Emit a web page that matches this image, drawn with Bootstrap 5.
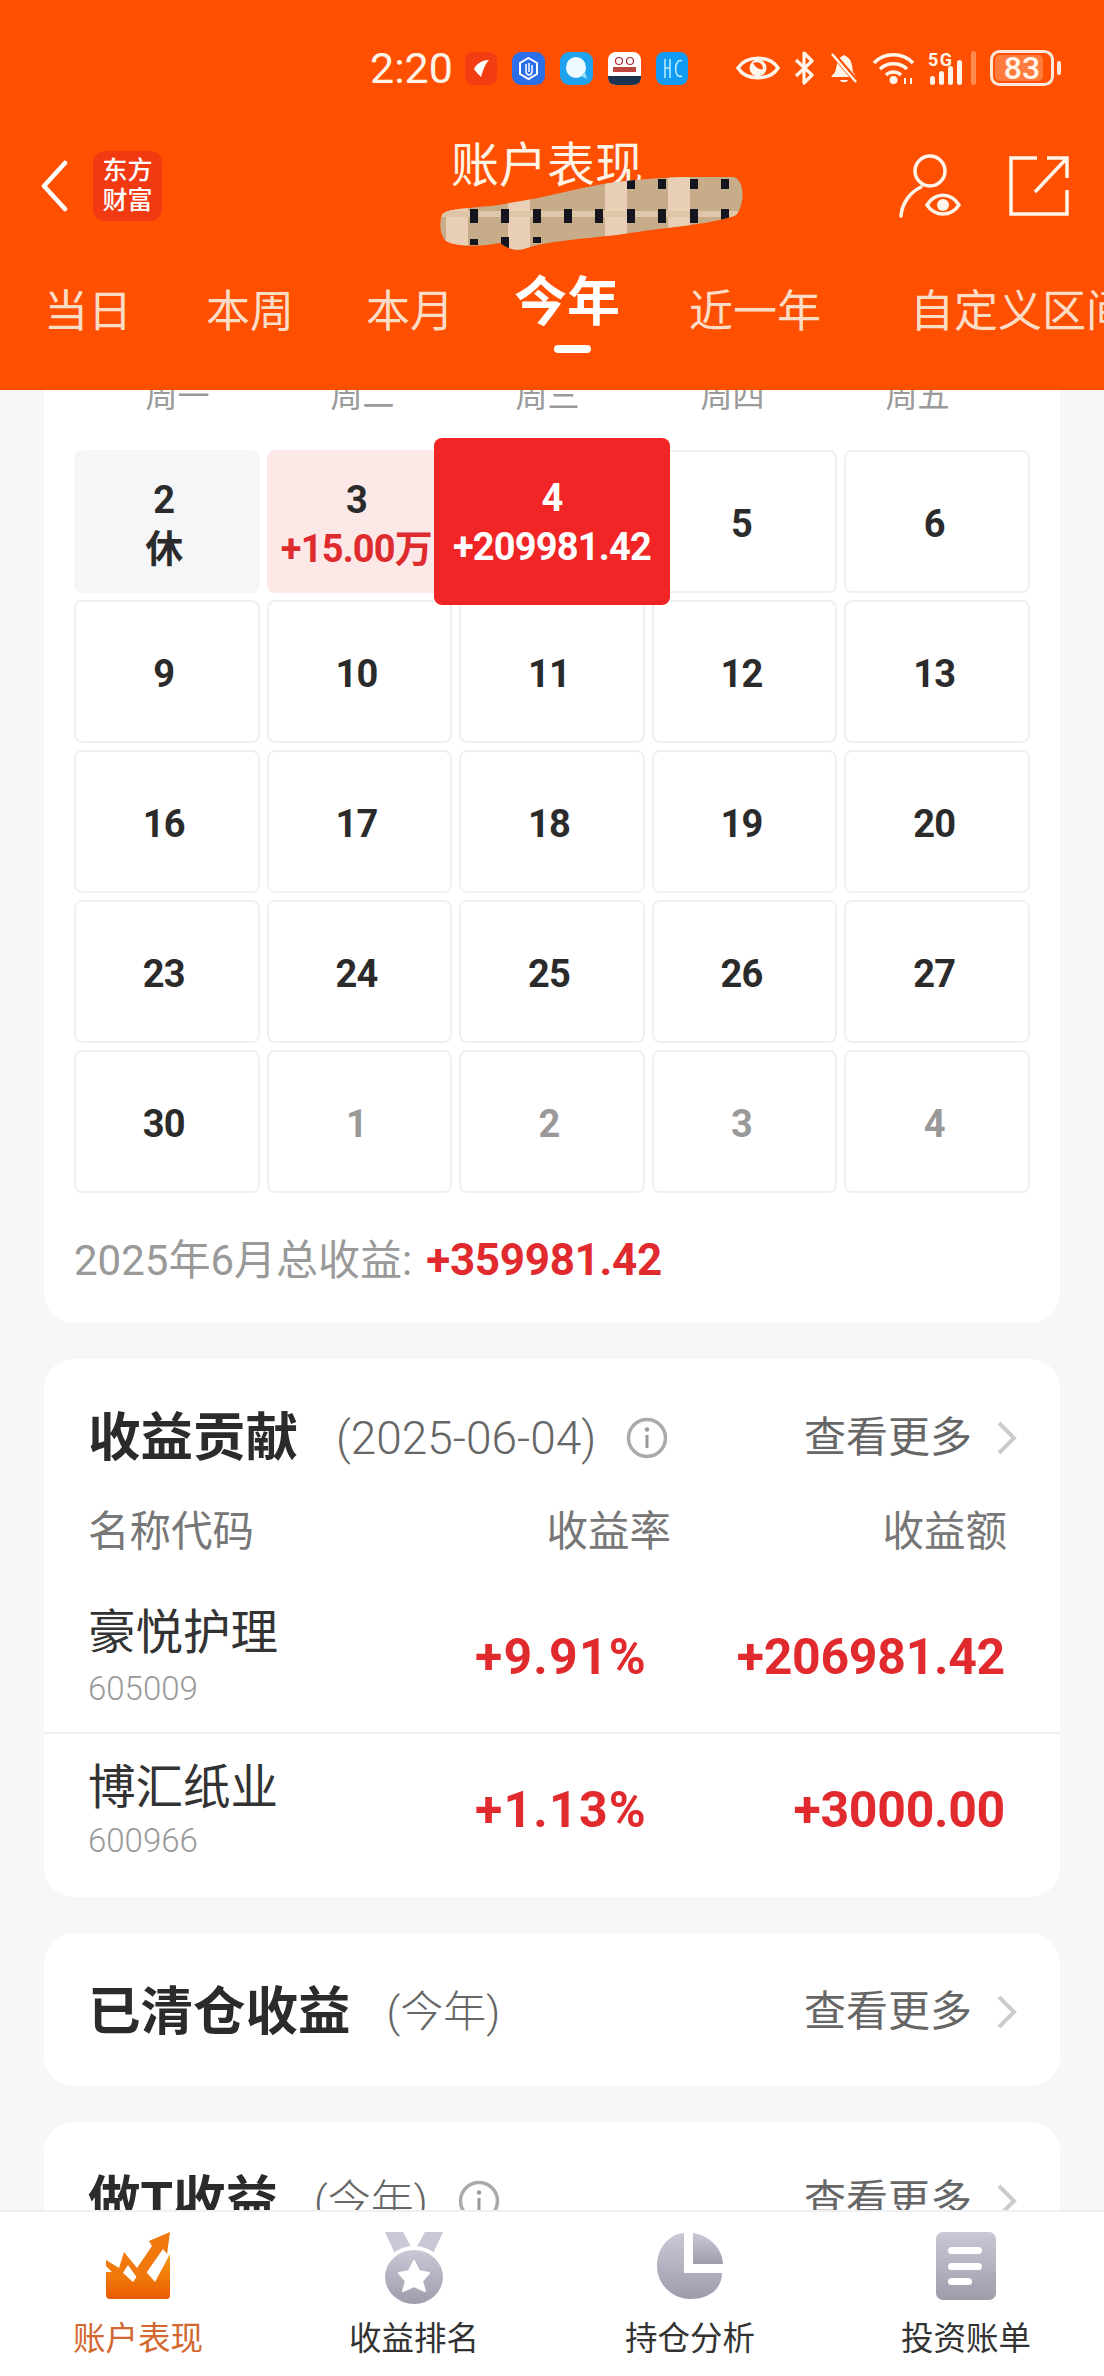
<!DOCTYPE html>
<html lang="zh-CN">
<head>
    <meta charset="UTF-8">
    <meta name="viewport" content="width=device-width, initial-scale=1.0">
    <title>账户表现</title>
    <link href="https://cdn.jsdelivr.net/npm/bootstrap@5.3.0/dist/css/bootstrap.min.css" rel="stylesheet">
    <style>
        html, body { margin: 0; height: 2376px; overflow: hidden; }
        body { font-family: Roboto, "Noto Sans CJK SC", sans-serif; background: #f5f7f9; color: #2b2b2b; }
        .app-page { width: 1104px; height: 2376px; }

        .top-head { height: 390px; flex: none; background: #fe5000; color: #fff; overflow: hidden; }
        .status-row { height: 40px; margin-top: 48px; padding-left: 370px; }
        .status-time { font-size: 43px; line-height: 40px; width: 95px; color: #fff5ea; }
        .app-icons { gap: 15px; width: 271px; }
        .sys-icons { gap: 12px; }
        .nav-row { height: 80px; margin-top: 58px; padding-left: 40px; padding-right: 35px; }
        .east-logo { width: 69px; height: 70px; margin-left: 25px; background: #f13a12; border-radius: 12px; font-size: 25px; font-weight: 500; line-height: 30px; text-align: center; padding-top: 5px; }
        .nav-title { margin-left: 289px; margin-top: -40px; font-size: 48px; line-height: 56px; color: #fff3e6; white-space: nowrap; }
        .scribble { position: absolute; left: 440px; top: 177px; }
        .tab-row { height: 80px; margin-top: 31px; white-space: nowrap; }
        .tab-item { font-size: 44px; line-height: 50px; color: #fbdcc6; }
        .tab-item:nth-child(1) { margin-left: 44px; }
        .tab-item:nth-child(2) { margin-left: 74px; }
        .tab-item:nth-child(3) { margin-left: 72px; }
        .tab-item:nth-child(4) { margin-left: 60px; font-size: 53px; font-weight: 700; color: #fff; line-height: 56px; padding-bottom: 6px; position: relative; }
        .tab-item:nth-child(5) { margin-left: 69px; }
        .tab-item:nth-child(6) { margin-left: 89px; }
        .tab-mark { position: absolute; left: 40px; top: 70px; width: 37px; height: 8px; border-radius: 4px; background: #fff; }

        .scroll-area { overflow: hidden; min-height: 0; }
        .white-box { margin: 36px 44px 0; background: #fff; border-radius: 30px; }
        .cal-box { margin-top: -30px; padding: 16px 30px 32px; }
        .week-row { display: grid; grid-template-columns: repeat(5, 185px); margin: 0 0 34px 11px; font-size: 32px; line-height: 40px; color: #9a9a9a; text-align: center; }
        .cal-grid { display: grid; grid-template-columns: repeat(5, 1fr); grid-auto-rows: 143px; gap: 7px; }
        .cal-day { position: relative; border: 2px solid #f0f0f0; border-radius: 8px; padding: 6px 6px 0 0; font-size: 38px; font-weight: 700; line-height: 49px; letter-spacing: -.8px; }
        .cal-day.rest { background: #f5f6f8; border-color: #f5f6f8; }
        .cal-day.gain { background: #fde8e8; border-color: #fde8e8; }
        .cal-day.gain .cal-amt { color: #dd2b2e; }
        .cal-day.other { color: #999; }
        .cal-raised { position: absolute; inset: -14px -27px; z-index: 2; padding-top: 2px; background: #f12525; color: #fff; border-radius: 8px; }
        .cal-sum { margin-top: 37px; font-size: 42px; line-height: 60px; color: #999; }
        .cal-sum b { color: #e02a2e; font-size: 44px; letter-spacing: -.3px; margin-left: 14px; }

        .head-row { height: 60px; padding-right: 43px; padding-left: 44px; }
        .head-title { font-size: 52.500px; font-weight: 700; line-height: 60px; color: #2b2b2b; }
        .head-date { font-size: 46px; line-height: 60px; color: #666; font-weight: 300; margin-left: 38px; }
        .head-sub { font-size: 43px; line-height: 60px; color: #666; font-weight: 300; margin-left: 36px; }
        .head-more { font-size: 42px; line-height: 60px; color: #666; }
        .info-mark { margin-left: 30px; }
        .sect-box { padding-top: 49px; }
        .col-head { height: 50px; margin-top: 39px; padding: 0 53px 0 44px; font-size: 41.500px; line-height: 50px; color: #777; }
        .col-rate-h { width: 200px; }
        .col-amt-h { width: 336px; }
        .stock-row { padding-left: 44px; padding-right: 55px; }
        .stock-row.one { padding-top: 48px; padding-bottom: 23px; border-bottom: 2px solid #eef0f2; }
        .stock-row.two { padding-top: 26px; padding-bottom: 36px; }
        .stock-row.two .stock-code { margin-top: 5px; }
        .stock-name { font-size: 47.500px; line-height: 56px; color: #333; }
        .stock-code { font-size: 33px; line-height: 40px; margin-top: 8px; color: #999; font-weight: 300; }
        .stock-num { font-size: 50px; font-weight: 700; color: #e02a2e; letter-spacing: -.3px; }
        .stock-rate { width: 200px; letter-spacing: 1.200px; }
        .stock-amt { width: 358px; }
        .plain-box { height: 153px; }

        .bottom-bar { height: 166px; flex: none; background: #fff; border-top: 2px solid #eef0f2; }
        .bar-item { width: 276px; font-size: 32.500px; line-height: 40px; color: #333; text-indent: -8px; }
        .bar-item.on { color: #d2682f; }
        .bar-icon { height: 72px; margin-top: 20px; margin-bottom: 15px; text-indent: 0; }
    </style>
</head>
<body>
<svg width="0" height="0" class="position-absolute">
    <defs>
        <linearGradient id="greyFill" x1="0" y1="0" x2="0" y2="1"><stop offset="0" stop-color="#c8c8d6"/><stop offset="1" stop-color="#9c9cab"/></linearGradient>
        <linearGradient id="orangeFill" x1="0" y1="0" x2="0" y2="1"><stop offset="0" stop-color="#f79a0c"/><stop offset="1" stop-color="#ea5a04"/></linearGradient>
        <clipPath id="blobClip"><path d="M2 38C6 30 40 32 70 26C110 20 140 10 170 6C210 0 280 -2 294 0C306 4 304 30 296 38C280 46 230 50 190 56C150 62 120 62 90 70C80 74 70 74 60 66C40 70 10 70 4 62C-1 54 0 44 2 38Z"/></clipPath>
    </defs>
</svg>
<div class="app-page d-flex flex-column">

    <div class="top-head position-relative">
        <div class="status-row d-flex align-items-center">
            <div class="status-time">2:20</div>
            <div class="app-icons d-flex align-items-center">
                <svg width="32" height="33" viewBox="0 0 32 33"><rect width="32" height="33" rx="8" fill="#f23d12"/><path d="M9 17C12 11 18 8 24 8C20 12 18 18 16 25C14 23 11 20 9 17Z" fill="#fff"/></svg>
                <svg width="33" height="33" viewBox="0 0 33 33"><rect width="33" height="33" rx="9" fill="#2b6fe8"/><path d="M16.500 6L25 11V22L16.500 27L8 22V11Z" fill="none" stroke="#fff" stroke-width="2"/><path d="M14 12V20M17 11V20M20 13V20M14 20C15 24 19 24 20 20" fill="none" stroke="#fff" stroke-width="1.500"/></svg>
                <svg width="33" height="33" viewBox="0 0 33 33"><rect width="33" height="33" rx="9" fill="#20a3ee"/><ellipse cx="16" cy="15.500" rx="10" ry="10.500" fill="#eefaff"/><path d="M21 24L27 27L25 20Z" fill="#8fdcff"/></svg>
                <svg width="33" height="33" viewBox="0 0 33 33"><rect width="33" height="33" rx="8" fill="#fff"/><path d="M0 24H33V25C33 30 30 33 25 33H8C3 33 0 30 0 25Z" fill="#1c3350"/><circle cx="11" cy="9" r="3.500" fill="none" stroke="#b4272b" stroke-width="1.200"/><circle cx="22" cy="9" r="3.500" fill="none" stroke="#b4272b" stroke-width="1.200"/><rect x="5" y="15" width="23" height="5" fill="#c0453f"/></svg>
                <svg width="32" height="33" viewBox="0 0 32 33"><rect width="32" height="33" rx="8" fill="#129bf2"/><path d="M9 7V26M14 7V26M9 16H14M26 9C18 5 17 28 26 24" fill="none" stroke="#bdf0ff" stroke-width="1.500"/></svg>
            </div>
            <div class="sys-icons d-flex align-items-center">
                <svg width="44" height="32" viewBox="0 0 44 32"><path d="M2 16C10 3 34 3 42 16C34 29 10 29 2 16Z" fill="none" stroke="#fff5ea" stroke-width="3.500"/><circle cx="22" cy="16" r="8.500" fill="#fff5ea"/><path d="M17 11C20 16 23 18 27 17C27 12 23 9 17 11Z" fill="#fe5000"/></svg>
                <svg width="25" height="34" viewBox="0 0 25 34"><path d="M4 9L20 24L12 32V2L20 10L4 25" fill="none" stroke="#fff5ea" stroke-width="3.200" stroke-linejoin="round"/></svg>
                <svg width="30" height="32" viewBox="0 0 30 32"><path d="M15 3C7 6 8 16 6 20L2 25H27L24 20C23 15 24 7 15 3Z" fill="#fff5ea"/><path d="M11 28H19C18 31 12 31 11 28Z" fill="#fff5ea"/><path d="M4 2L28 30" stroke="#fe5000" stroke-width="5"/><path d="M3 2L27 30" stroke="#fff5ea" stroke-width="2.500"/></svg>
                <svg width="45" height="34" viewBox="0 0 45 34"><path d="M3 12C13 1 32 1 42 12M9 18C16 11 29 11 36 18M15 24C19 20 26 20 30 24" fill="none" stroke="#fff5ea" stroke-width="3.500"/><circle cx="22.500" cy="29" r="4" fill="#fff5ea"/><path d="M34 27V33M40 27V33" stroke="#fff5ea" stroke-width="2"/></svg>
                <svg width="50" height="35" viewBox="0 0 50 35">
                    <text x="0" y="15" font-size="18" font-weight="700" fill="#fff5ea" font-family="Roboto" textLength="24">5G</text>
                    <rect x="2" y="25" width="5" height="9" rx="2.500" fill="#fff5ea"/><rect x="11" y="20" width="5" height="14" rx="2.500" fill="#fff5ea"/><rect x="20" y="15" width="5" height="19" rx="2.500" fill="#fff5ea"/><rect x="29" y="9" width="5" height="25" rx="2.500" fill="#fff5ea"/><rect x="43" y="0" width="5" height="34" rx="2.500" fill="#ff8a4f"/>
                </svg>
                <svg width="72" height="36" viewBox="0 0 72 36">
                    <rect x="1.500" y="1.500" width="61" height="33" rx="8" fill="none" stroke="#fde7d6" stroke-width="3"/>
                    <rect x="5" y="5" width="48" height="26" rx="5" fill="#ff7c3e"/>
                    <text x="32" y="29" font-size="32" font-weight="500" text-anchor="middle" fill="#fff5ea" font-family="Roboto">83</text>
                    <rect x="67" y="11" width="4" height="14" rx="2" fill="#fde7d6"/>
                </svg>
            </div>
        </div>

        <div class="nav-row d-flex align-items-center">
            <svg width="28" height="52" viewBox="0 0 28 52"><path d="M25 3L4 26L25 49" fill="none" stroke="#fff" stroke-width="4.500" stroke-linecap="round" stroke-linejoin="round"/></svg>
            <div class="east-logo flex-shrink-0">东方<br>财富</div>
            <div class="nav-title">账户表现</div>
            <div class="ms-auto d-flex align-items-center gap-5">
                <svg width="62" height="64" viewBox="0 0 62 64"><circle cx="31" cy="17" r="15" fill="none" stroke="#fff5ea" stroke-width="3.500"/><path d="M2 62C3 48 12 38 22 33" fill="none" stroke="#fff5ea" stroke-width="3.500" stroke-linecap="round"/><path d="M28 51C36 38 52 38 60 51C52 63 36 63 28 51Z" fill="none" stroke="#fff5ea" stroke-width="3.500"/><circle cx="44" cy="51" r="6" fill="#fff5ea"/></svg>
                <svg width="60" height="60" viewBox="0 0 60 60"><path d="M28 2H2V58H58V34" fill="none" stroke="#fff5ea" stroke-width="3.500"/><path d="M26 36L58 2M38 2H58V22" fill="none" stroke="#fff5ea" stroke-width="3.500"/></svg>
            </div>
        </div>

        <svg class="scribble" width="304" height="74" viewBox="0 0 304 74">
            <g clip-path="url(#blobClip)">
                <rect width="304" height="74" fill="#c7ac89"/>
                <rect x="6" width="22" height="74" fill="#e8cfb5"/><rect x="68" width="22" height="74" fill="#e8cfb5"/><rect x="165" width="22" height="74" fill="#e8cfb5"/><rect x="228" width="22" height="74" fill="#e8cfb5"/>
                <rect y="34" width="304" height="6" fill="#e0c6a9"/>
                <g fill="#15151f">
                    <rect x="30" y="32" width="8" height="14"/><rect x="61" y="32" width="8" height="14"/><rect x="93" y="32" width="8" height="14"/><rect x="124" y="32" width="8" height="14"/><rect x="155" y="32" width="8" height="14"/><rect x="187" y="32" width="8" height="14"/><rect x="218" y="32" width="8" height="14"/><rect x="250" y="32" width="8" height="14"/><rect x="281" y="32" width="8" height="14"/>
                    <rect x="187" y="2" width="8" height="10"/><rect x="218" y="2" width="8" height="10"/><rect x="250" y="2" width="8" height="10"/><rect x="281" y="2" width="8" height="10"/>
                    <rect x="30" y="62" width="8" height="6"/><rect x="61" y="60" width="8" height="12"/><rect x="93" y="60" width="8" height="6"/>
                </g>
            </g>
        </svg>

        <div class="tab-row d-flex align-items-end">
            <div class="tab-item flex-shrink-0">当日</div>
            <div class="tab-item flex-shrink-0">本周</div>
            <div class="tab-item flex-shrink-0">本月</div>
            <div class="tab-item flex-shrink-0">今年<span class="tab-mark"></span></div>
            <div class="tab-item flex-shrink-0">近一年</div>
            <div class="tab-item flex-shrink-0">自定义区间</div>
        </div>
    </div>

    <div class="scroll-area flex-grow-1">
        <div class="white-box cal-box">
            <div class="week-row"><div>周一</div><div>周二</div><div>周三</div><div>周四</div><div>周五</div></div>
            <div class="cal-grid" id="calGrid"></div>
            <div class="cal-sum">2025年6月总收益:<b>+359981.42</b></div>
        </div>

        <div class="white-box sect-box">
            <div class="head-row d-flex align-items-center">
                <span class="head-title">收益贡献</span>
                <span class="head-date">(2025-06-04)</span>
                <svg class="info-mark" width="42" height="42" viewBox="0 0 42 42"><circle cx="21" cy="21" r="18.500" fill="none" stroke="#aaa" stroke-width="3.500"/><circle cx="21" cy="12.500" r="2.200" fill="#999"/><path d="M21 18V31" stroke="#999" stroke-width="3"/></svg>
                <span class="head-more ms-auto">查看更多</span>
                <svg class="ms-4" width="21" height="34" viewBox="0 0 21 34"><path d="M3 2L18 17L3 32" fill="none" stroke="#ccc" stroke-width="4"/></svg>
            </div>
            <div class="col-head d-flex">
                <div class="flex-grow-1">名称代码</div>
                <div class="col-rate-h text-end">收益率</div>
                <div class="col-amt-h text-end">收益额</div>
            </div>
            <div class="stock-row one d-flex align-items-center">
                <div class="flex-grow-1"><div class="stock-name">豪悦护理</div><div class="stock-code">605009</div></div>
                <div class="stock-num stock-rate text-end">+9.91%</div>
                <div class="stock-num stock-amt text-end">+206981.42</div>
            </div>
            <div class="stock-row two d-flex align-items-center">
                <div class="flex-grow-1"><div class="stock-name">博汇纸业</div><div class="stock-code">600966</div></div>
                <div class="stock-num stock-rate text-end">+1.13%</div>
                <div class="stock-num stock-amt text-end">+3000.00</div>
            </div>
        </div>

        <div class="white-box sect-box plain-box">
            <div class="head-row d-flex align-items-center">
                <span class="head-title">已清仓收益</span>
                <span class="head-sub">(今年)</span>
                <span class="head-more ms-auto">查看更多</span>
                <svg class="ms-4" width="21" height="34" viewBox="0 0 21 34"><path d="M3 2L18 17L3 32" fill="none" stroke="#ccc" stroke-width="4"/></svg>
            </div>
        </div>

        <div class="white-box sect-box plain-box">
            <div class="head-row d-flex align-items-center">
                <span class="head-title">做T收益</span>
                <span class="head-sub">(今年)</span>
                <svg class="info-mark" width="42" height="42" viewBox="0 0 42 42"><circle cx="21" cy="21" r="18.500" fill="none" stroke="#aaa" stroke-width="3.500"/><circle cx="21" cy="12.500" r="2.200" fill="#999"/><path d="M21 18V31" stroke="#999" stroke-width="3"/></svg>
                <span class="head-more ms-auto">查看更多</span>
                <svg class="ms-4" width="21" height="34" viewBox="0 0 21 34"><path d="M3 2L18 17L3 32" fill="none" stroke="#ccc" stroke-width="4"/></svg>
            </div>
        </div>
    </div>

    <div class="bottom-bar d-flex justify-content-center">
        <div class="bar-item on text-center">
            <div class="bar-icon"><svg width="66" height="68" viewBox="0 0 66 68"><path d="M1 40V63C1 66 3 67 5 67H61C64 67 65 66 65 63V22L50 50L38 36L28 50L17 40Z" fill="url(#orangeFill)"/><path d="M1 28L14 36L19 20L32 36L47 14L44 9L65 0L62 22L58 17L35 50L23 33L14 47L1 34Z" fill="#f0780c"/></svg></div>
            账户表现
        </div>
        <div class="bar-item text-center">
            <div class="bar-icon"><svg width="60" height="72" viewBox="0 0 60 72"><path d="M1 0H19L30 20L41 0H59L47 26H13Z" fill="#c8c8d6"/><ellipse cx="30" cy="44" rx="32" ry="30" fill="#fff"/><ellipse cx="30" cy="45" rx="29" ry="27" fill="url(#greyFill)"/><path d="M30 29L35 39L45 41L38 49L41 59L30 54L19 59L22 49L15 41L25 39Z" fill="#fff" stroke="#fff" stroke-width="2" stroke-linejoin="round"/></svg></div>
            收益排名
        </div>
        <div class="bar-item text-center">
            <div class="bar-icon"><svg width="66" height="68" viewBox="0 0 66 68"><path d="M27 1V41H65C65 58 51 67 33 67C15 67 0 52 0 34C0 16 12 2 27 1Z" fill="url(#greyFill)"/><path d="M36 1C51 3 65 15 66 32H36Z" fill="url(#greyFill)"/></svg></div>
            持仓分析
        </div>
        <div class="bar-item text-center">
            <div class="bar-icon"><svg width="60" height="68" viewBox="0 0 60 68"><rect width="60" height="68" rx="7" fill="url(#greyFill)"/><rect x="12" y="15" width="34" height="7" rx="3.500" fill="#fff"/><rect x="12" y="31" width="34" height="7" rx="3.500" fill="#fff"/><rect x="12" y="46" width="24" height="7" rx="3.500" fill="#fff"/></svg></div>
            投资账单
        </div>
    </div>
</div>

<script src="https://cdn.jsdelivr.net/npm/bootstrap@5.3.0/dist/js/bootstrap.bundle.min.js"></script>
<script>
    // calendar cells for June 2025
    const days = [
        { d: 2, sub: '休', cls: 'rest' }, { d: 3, sub: '+15.00万', cls: 'gain' }, { d: 4, sub: '+209981.42', raised: true }, { d: 5 }, { d: 6 },
        { d: 9 }, { d: 10 }, { d: 11 }, { d: 12 }, { d: 13 },
        { d: 16 }, { d: 17 }, { d: 18 }, { d: 19 }, { d: 20 },
        { d: 23 }, { d: 24 }, { d: 25 }, { d: 26 }, { d: 27 },
        { d: 30 }, { d: 1, cls: 'other' }, { d: 2, cls: 'other' }, { d: 3, cls: 'other' }, { d: 4, cls: 'other' }
    ];
    const grid = document.getElementById('calGrid');
    days.forEach(day => {
        const cell = document.createElement('div');
        cell.className = 'cal-day d-flex flex-column align-items-center justify-content-center ' + (day.cls || '');
        const inner = `<div>${day.d}</div>` + (day.sub ? `<div class="cal-amt">${day.sub}</div>` : '');
        cell.innerHTML = day.raised
            ? `<div class="cal-raised d-flex flex-column align-items-center justify-content-center">${inner}</div>`
            : inner;
        grid.appendChild(cell);
    });
</script>
</body>
</html>
